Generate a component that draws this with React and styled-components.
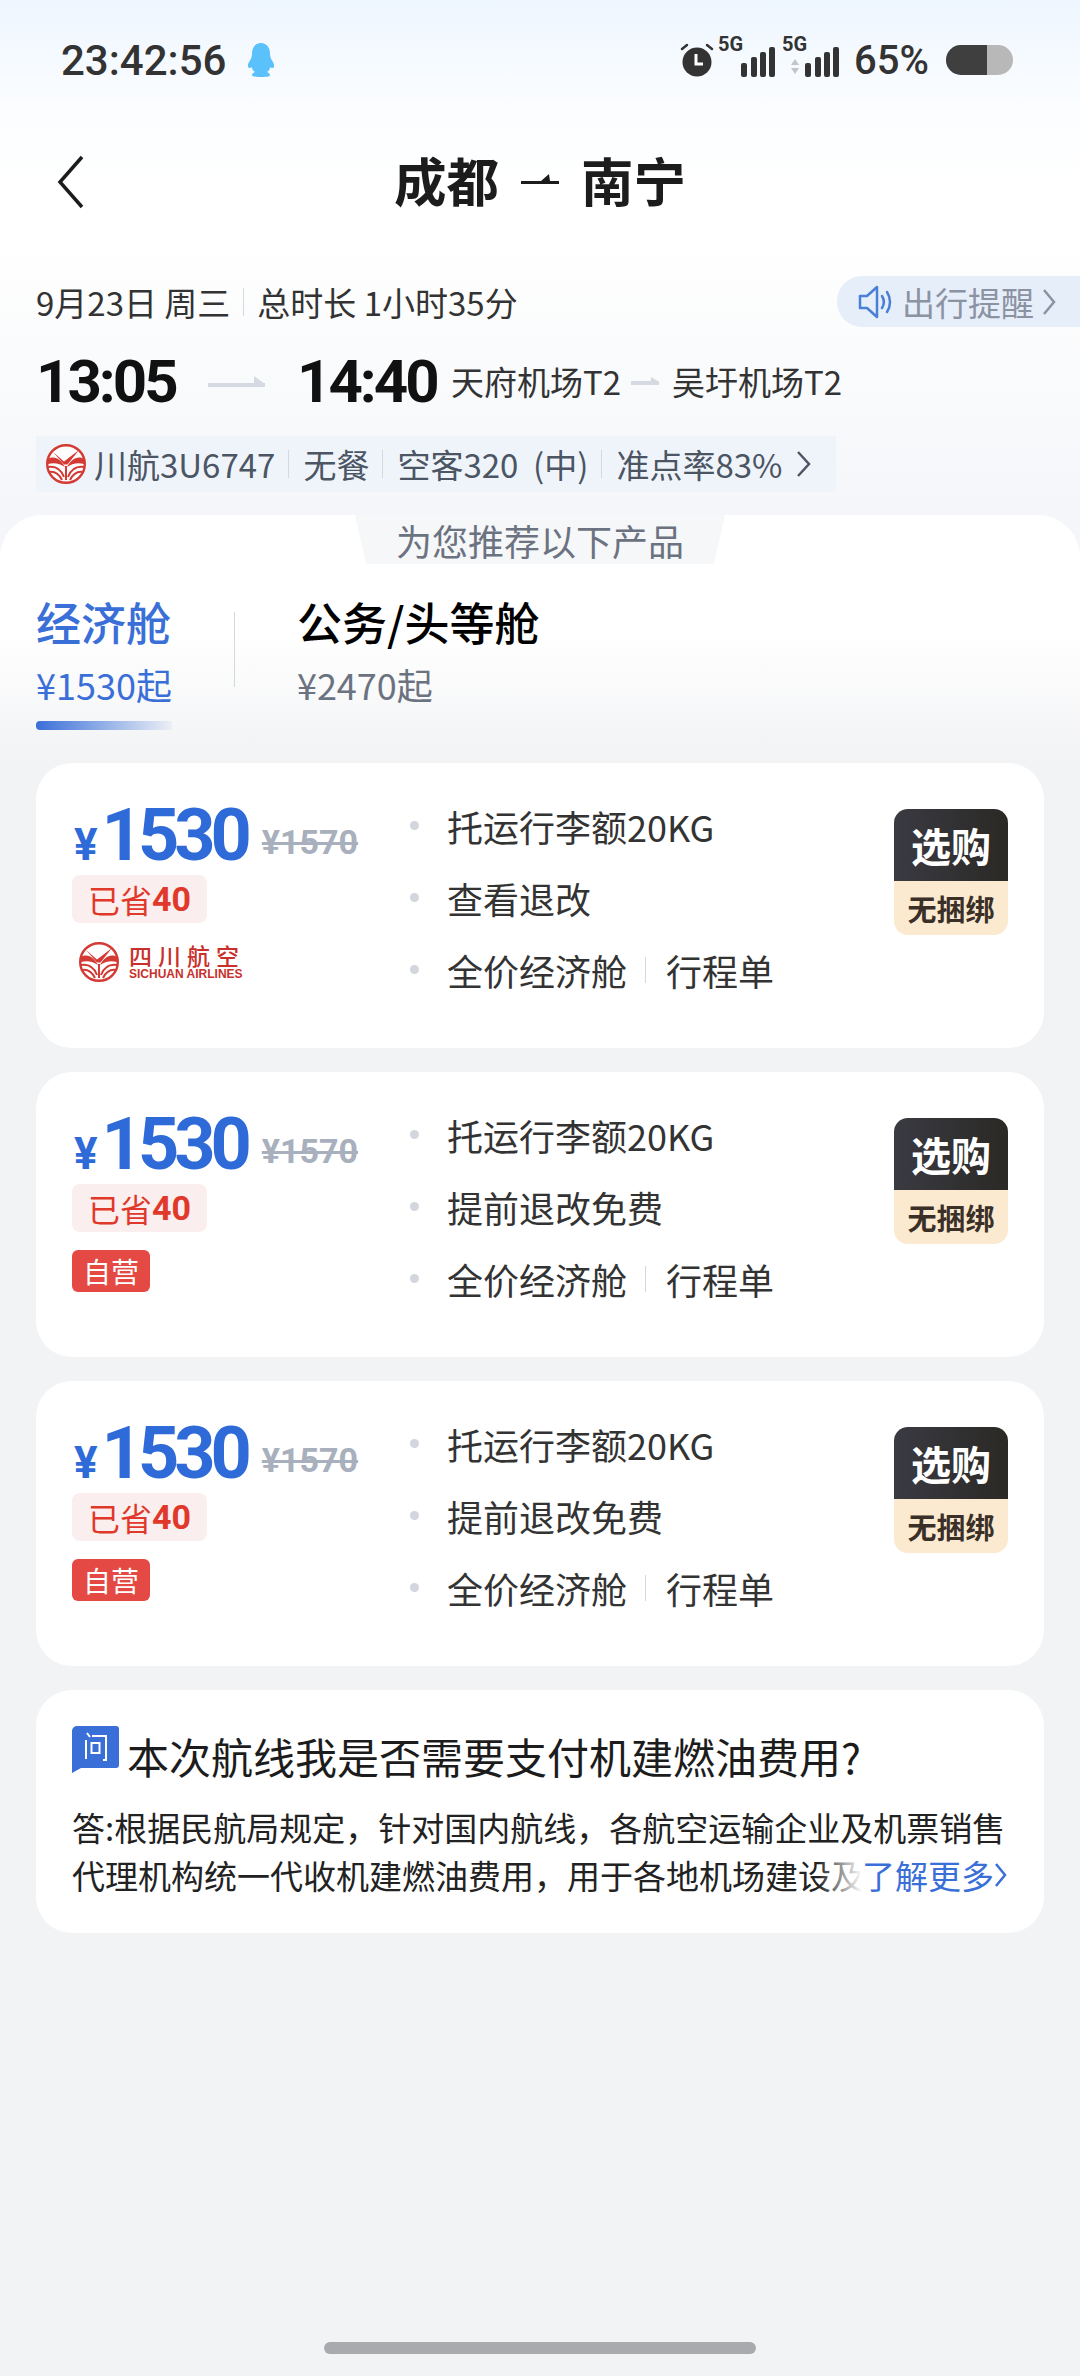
import React from 'react'
import styled, { createGlobalStyle } from 'styled-components'

const GlobalStyle = createGlobalStyle`
  html, body {
    margin: 0;
    padding: 0;
  }
  * {
    box-sizing: border-box;
  }
  body {
    font-family: "Noto Sans CJK SC", "Noto Sans", sans-serif;
  }
`

const products = [
  { refund: '查看退改', brand: 'airline' },
  { refund: '提前退改免费', brand: 'self' },
  { refund: '提前退改免费', brand: 'self' },
]

function SichuanMark({ size = 40 }) {
  return (
    <svg width={size} height={size} viewBox="0 0 40 40">
      <circle cx="20" cy="20" r="18.800" fill="#fff" stroke="#d43a34" strokeWidth="2.400" />
      <path d="M7 8l11 9.500L33 6 21.500 20.500h-3.500z" fill="#d43a34" />
      <path d="M2 15c7-4 13 1 17 8-5-3-10-5-17-3z" fill="#d43a34" />
      <path d="M38 15c-7-4-13 1-17 8 5-3 10-5 17-3z" fill="#d43a34" />
      <path
        d="M2 23c7-1 13 2 16 10M3 28c6-1 10 2 13 8M38 23c-7-1-13 2-16 10M37 28c-6-1-10 2-13 8M20 22v14"
        fill="none"
        stroke="#d43a34"
        strokeWidth="2"
      />
    </svg>
  )
}

function AirlineLogo() {
  return (
    <LogoRow>
      <SichuanMark size={40} />
      <LogoWords>
        <LogoCn>四川航空</LogoCn>
        <LogoEn>SICHUAN AIRLINES</LogoEn>
      </LogoWords>
    </LogoRow>
  )
}

function SignalBars({ dual }) {
  return (
    <SignalWrap>
      <FiveG>5G</FiveG>
      <svg width="52" height="36" viewBox="0 0 52 36">
        {dual && (
          <g fill="#c4c4c4">
            <path d="M4 15l4 6H0z" />
            <path d="M0 24h8l-4 6z" />
          </g>
        )}
        <g fill="#333">
          <rect x="14" y="19" width="6" height="14" rx="2" />
          <rect x="24" y="13" width="6" height="20" rx="2" />
          <rect x="33" y="8" width="6" height="25" rx="2" />
          <rect x="42" y="3" width="6" height="30" rx="2" />
        </g>
      </svg>
    </SignalWrap>
  )
}

function Arrow({ width, height = 10, color = '#d5dae2' }) {
  return (
    <svg width={width} height={height} viewBox={`0 0 ${width} ${height}`}>
      <path d={`M${width - height} 0L${width} ${height - 3}H${width - height}z`} fill={color} />
      <rect x="0" y={height - 4} width={width} height="4" fill={color} />
    </svg>
  )
}

function ProductCard({ refund, brand }) {
  return (
    <Card>
      <PriceColumn>
        <PriceRow>
          <Yen>¥</Yen>
          <Price>1530</Price>
          <OldPrice>¥1570</OldPrice>
        </PriceRow>
        <Saved>已省<b>40</b></Saved>
        {brand === 'airline' ? <AirlineLogo /> : <SelfTag>自营</SelfTag>}
      </PriceColumn>
      <Features>
        <Feature>托运行李额20KG</Feature>
        <Feature>{refund}</Feature>
        <Feature>全价经济舱<FeatureSep />行程单</Feature>
      </Features>
      <BuyButton>
        <BuyTop>选购</BuyTop>
        <BuyBottom>无捆绑</BuyBottom>
      </BuyButton>
    </Card>
  )
}

export default function App() {
  return (
    <Page>
      <GlobalStyle />
      <StatusBar>
        <StatusLeft>
          <Clock>23:42:56</Clock>
          <svg width="30" height="34" viewBox="0 0 30 34">
            <path d="M15 0c6 0 9 5 9 11 0 3 1 5 3 8 2 4 1 6-1 6-1 0-2-1-2-1 0 2-1 4-3 5 2 1 3 2 3 3 0 1-1 2-9 2s-9-1-9-2c0-1 1-2 3-3-2-1-3-3-3-5 0 0-1 1-2 1-2 0-3-2-1-6 2-3 3-5 3-8C6 5 9 0 15 0z" fill="#5ac1fb" />
          </svg>
        </StatusLeft>
        <StatusRight>
          <svg width="36" height="36" viewBox="0 0 36 36">
            <circle cx="18" cy="20" r="14.500" fill="#333" />
            <path d="M17 12v10h7" fill="none" stroke="#fff" strokeWidth="3" />
            <path d="M3 7l5-4M33 7l-5-4" stroke="#333" strokeWidth="2.500" strokeLinecap="round" />
          </svg>
          <SignalBars />
          <SignalBars dual />
          <Percent>65%</Percent>
          <Battery><BatteryFill /></Battery>
        </StatusRight>
      </StatusBar>

      <Header>
        <BackIcon width="27" height="54" viewBox="0 0 27 54">
          <path d="M25 2L3 27l22 25" fill="none" stroke="#1c1c1c" strokeWidth="3.500" />
        </BackIcon>
        <Title>
          成都
          <svg width="38" height="14" viewBox="0 0 38 14">
            <path d="M0 9h38v3H0zM20 9l8-7 1 7z" fill="#1c1c1c" />
          </svg>
          南宁
        </Title>
      </Header>

      <Summary>
        <DateRow>
          <DateText>9月23日 周三<ThinSep />总时长 1小时35分</DateText>
          <Reminder>
            <svg width="36" height="36" viewBox="0 0 36 36" fill="none" stroke="#4a7fd6" strokeWidth="2.500">
              <path d="M2 12h7l10-9v30l-10-9H2z" strokeLinejoin="round" />
              <path d="M24 12c2.500 4 2.500 8 0 12M29 8c4 6 4 14 0 20" strokeLinecap="round" />
            </svg>
            出行提醒
            <svg width="14" height="28" viewBox="0 0 14 28">
              <path d="M2 2l10 12L2 26" fill="none" stroke="#8b93a3" strokeWidth="2.500" />
            </svg>
          </Reminder>
        </DateRow>
        <TimeRow>
          <BigTime>13:05</BigTime>
          <TimeArrow><Arrow width={57} height={11} /></TimeArrow>
          <BigTime>14:40</BigTime>
          <Airport>天府机场T2</Airport>
          <AirportArrow><Arrow width={28} height={8} /></AirportArrow>
          <Airport>吴圩机场T2</Airport>
        </TimeRow>
        <FlightChip>
          <SichuanMark size={40} />
          <ChipText>川航3U6747</ChipText>
          <ChipSep />
          <ChipText>无餐</ChipText>
          <ChipSep />
          <ChipText>空客320&nbsp;&nbsp;(中)</ChipText>
          <ChipSep />
          <ChipText>准点率83%</ChipText>
          <ChipChevron width="16" height="30" viewBox="0 0 16 30">
            <path d="M2 3l11 12L2 27" fill="none" stroke="#4b5563" strokeWidth="2.500" />
          </ChipChevron>
        </FlightChip>
      </Summary>

      <Sheet>
        <RecommendWrap>
          <RecommendTab>为您推荐以下产品</RecommendTab>
        </RecommendWrap>
        <Tabs>
          <Tab $active>
            <TabName $active>经济舱</TabName>
            <TabPrice $active>¥1530起</TabPrice>
            <TabLine />
          </Tab>
          <TabDivider />
          <Tab>
            <TabName>公务/头等舱</TabName>
            <TabPrice>¥2470起</TabPrice>
          </Tab>
        </Tabs>
        <CardList>
          {products.map((p, i) => (
            <ProductCard key={i} refund={p.refund} brand={p.brand} />
          ))}
          <FaqCard>
            <FaqTitle>
              <svg width="47" height="47" viewBox="0 0 47 47">
                <path d="M5 0h39a3 3 0 0 1 3 3v36a3 3 0 0 1-3 3H9l-9 5V5a5 5 0 0 1 5-5z" fill="#3a6fd8" />
                <path d="M15 7l3 4M14 14v19M20 10h14v24h-3" fill="none" stroke="#fff" strokeWidth="2" />
                <rect x="19.500" y="17" width="8" height="10" fill="none" stroke="#fff" strokeWidth="2" />
              </svg>
              本次航线我是否需要支付机建燃油费用?
            </FaqTitle>
            <FaqAnswer>
              {'答:根据民航局规定\uFF0C针对国内航线\uFF0C各航空运输企业及机票销售代理机构统一代收机建燃油费用\uFF0C用于各地机场建设及'}
              <LearnMore>
                了解更多
                <svg width="14" height="28" viewBox="0 0 14 28">
                  <path d="M2 3l9 11-9 11" fill="none" stroke="#3a6fd8" strokeWidth="2.500" />
                </svg>
              </LearnMore>
            </FaqAnswer>
          </FaqCard>
        </CardList>
        <HomeBarWrap>
          <HomeBar />
        </HomeBarWrap>
      </Sheet>
    </Page>
  )
}

const Page = styled.div`
  width: 1080px;
  height: 2376px;
  overflow: hidden;
  display: flex;
  flex-direction: column;
  background: linear-gradient(180deg, #eef6ff 0, #fbfdff 105px, #ffffff 190px, #ffffff 240px, #f4f6f9 516px);
`

const StatusBar = styled.div`
  height: 120px;
  padding: 0 67px 0 61px;
  display: flex;
  align-items: center;
  justify-content: space-between;
`

const StatusLeft = styled.div`
  display: flex;
  align-items: center;
  gap: 20px;
`

const Clock = styled.span`
  font-family: Roboto, sans-serif;
  font-size: 42px;
  font-weight: 500;
  color: #333;
`

const StatusRight = styled.div`
  display: flex;
  align-items: center;
  gap: 10px;
`

const SignalWrap = styled.div`
  position: relative;
  width: 52px;
  height: 36px;
  margin-left: 2px;
  margin-top: 4px;
`

const FiveG = styled.span`
  position: absolute;
  left: -9px;
  top: -12px;
  font-family: Roboto, sans-serif;
  font-size: 20px;
  font-weight: 700;
  color: #333;
`

const Percent = styled.span`
  font-family: Roboto, sans-serif;
  font-size: 40px;
  font-weight: 500;
  color: #333;
  margin: 0 7px 0 1px;
`

const Battery = styled.div`
  width: 67px;
  height: 30px;
  border-radius: 15px;
  background: #b8b8b8;
  overflow: hidden;
`

const BatteryFill = styled.div`
  width: 41px;
  height: 100%;
  background: #3f3f3f;
`

const Header = styled.div`
  height: 124px;
  position: relative;
  display: flex;
  align-items: center;
  justify-content: center;
`

const BackIcon = styled.svg`
  position: absolute;
  left: 57px;
  top: 35px;
`

const Title = styled.div`
  display: flex;
  align-items: center;
  gap: 22px;
  margin-top: -6px;
  font-size: 52.500px;
  font-weight: 700;
  color: #1c1c1c;
  line-height: 60px;
`

const Summary = styled.div`
  height: 271px;
  padding-top: 32px;
  display: flex;
  flex-direction: column;
`

const DateRow = styled.div`
  height: 51px;
  display: flex;
  align-items: center;
  justify-content: space-between;
  padding-left: 36px;
`

const DateText = styled.div`
  display: flex;
  align-items: center;
  font-size: 33px;
  color: #333;
  white-space: pre;
`

const ThinSep = styled.i`
  width: 1px;
  height: 28px;
  margin: 0 13px;
  background: #d5d8de;
`

const Reminder = styled.div`
  width: 243px;
  height: 51px;
  padding-left: 21px;
  display: flex;
  align-items: center;
  gap: 8px;
  font-size: 33px;
  color: #8b93a3;
  border-radius: 25px 0 0 25px;
  background: #e6eefa;
`

const TimeRow = styled.div`
  height: 74px;
  margin-top: 17px;
  padding-left: 36px;
  display: flex;
  align-items: center;
`

const BigTime = styled.span`
  font-family: Roboto, sans-serif;
  font-size: 60px;
  font-weight: 700;
  letter-spacing: -3px;
  color: #111;
  width: 150px;
  flex: none;
`

const TimeArrow = styled.span`
  display: flex;
  margin: 0 32px 0 22px;
`

const Airport = styled.span`
  font-size: 33px;
  color: #333;
  margin-left: 4px;
`

const AirportArrow = styled.span`
  display: flex;
  margin: 0 9px 0 10px;
`

const FlightChip = styled.div`
  width: 800px;
  height: 56px;
  margin: 18px 0 0 36px;
  padding-left: 10px;
  display: flex;
  align-items: center;
  background: #eff4fb;
`

const ChipText = styled.span`
  font-size: 33px;
  color: #4b5563;
  margin-left: 8px;
  white-space: nowrap;
`

const ChipSep = styled.i`
  width: 1px;
  height: 28px;
  margin: 0 6px 0 13px;
  background: #d5d8de;
`

const ChipChevron = styled.svg`
  margin-left: 14px;
`

const Sheet = styled.div`
  flex: 1;
  display: flex;
  flex-direction: column;
  border-radius: 42px 42px 0 0;
  background: linear-gradient(180deg, #ffffff 0, #ffffff 120px, #f2f3f5 244px, #f2f3f5 100%);
`

const RecommendWrap = styled.div`
  display: flex;
  justify-content: center;
`

const RecommendTab = styled.div`
  width: 370px;
  height: 49px;
  display: flex;
  align-items: center;
  justify-content: center;
  font-size: 36px;
  color: #6b7280;
  background: #f6f7f9;
  clip-path: polygon(0 0, 100% 0, 97% 100%, 3% 100%);
`

const Tabs = styled.div`
  height: 199px;
  padding: 26px 0 0 36px;
  display: flex;
  align-items: flex-start;
`

const Tab = styled.div`
  display: flex;
  flex-direction: column;
`

const TabName = styled.div`
  font-size: 45px;
  font-weight: 500;
  line-height: 64px;
  color: ${props => (props.$active ? '#3a6fd8' : '#000')};
`

const TabPrice = styled.div`
  font-size: 36px;
  line-height: 50px;
  margin-top: 5px;
  color: ${props => (props.$active ? '#3a6fd8' : '#6b7280')};
`

const TabLine = styled.div`
  height: 9px;
  margin-top: 12px;
  border-radius: 4px 0 0 4px;
  background: linear-gradient(90deg, #3a6fd8, rgba(58, 111, 216, 0.05));
`

const TabDivider = styled.div`
  width: 1px;
  height: 75px;
  margin: 22px 62px 0 62px;
  background: #d5d8de;
`

const CardList = styled.div`
  padding: 0 36px;
  display: flex;
  flex-direction: column;
  gap: 24px;
`

const Card = styled.div`
  height: 285px;
  padding: 33px 36px 0;
  position: relative;
  display: flex;
  border-radius: 36px;
  background: #fff;
`

const PriceColumn = styled.div`
  width: 338px;
  display: flex;
  flex-direction: column;
  align-items: flex-start;
`

const PriceRow = styled.div`
  height: 80px;
  display: flex;
  align-items: baseline;
`

const Yen = styled.span`
  font-family: Roboto, sans-serif;
  font-size: 44px;
  font-weight: 700;
  color: #2f6ad9;
  margin: 0 4px 0 2px;
`

const Price = styled.span`
  font-family: Roboto, sans-serif;
  font-size: 72px;
  font-weight: 700;
  letter-spacing: -5px;
  line-height: 80px;
  color: #2f6ad9;
`

const OldPrice = styled.span`
  align-self: flex-start;
  margin: 26px 0 0 15px;
  font-family: Roboto, sans-serif;
  font-size: 34px;
  line-height: 40px;
  font-weight: 700;
  color: #a8afbd;
  text-decoration: line-through;
`

const Saved = styled.div`
  height: 48px;
  padding: 0 16px;
  display: flex;
  align-items: center;
  margin-top: -1px;
  font-size: 32px;
  color: #e0392b;
  border-radius: 8px;
  background: #fbeeee;

  b {
    font-family: Roboto, sans-serif;
    font-weight: 700;
    font-size: 34px;
  }
`

const SelfTag = styled.div`
  width: 78px;
  height: 42px;
  margin-top: 18px;
  display: flex;
  align-items: center;
  justify-content: center;
  font-size: 28px;
  color: #fff;
  border-radius: 6px;
  background: #e44a43;
`

const LogoRow = styled.div`
  margin: 19px 0 0 7px;
  display: flex;
  align-items: center;
  gap: 10px;
`

const LogoWords = styled.div`
  display: flex;
  flex-direction: column;
  color: #c9302c;
`

const LogoCn = styled.span`
  font-size: 23px;
  font-weight: 500;
  line-height: 25px;
  letter-spacing: 6px;
`

const LogoEn = styled.span`
  font-family: "Liberation Sans", sans-serif;
  font-size: 12px;
  font-weight: 700;
  line-height: 13px;
  white-space: nowrap;
`

const Features = styled.div`
  margin-top: -6px;
  display: flex;
  flex-direction: column;
`

const Feature = styled.div`
  height: 72px;
  position: relative;
  padding-left: 37px;
  display: flex;
  align-items: center;
  font-size: 36px;
  color: #333;

  &::before {
    content: '';
    position: absolute;
    left: 0;
    top: 31px;
    width: 9px;
    height: 9px;
    border-radius: 50%;
    background: #d3d6dc;
  }
`

const FeatureSep = styled.i`
  width: 1px;
  height: 26px;
  margin: 0 20px 0 18px;
  background: #d5d8de;
`

const BuyButton = styled.div`
  position: absolute;
  top: 46px;
  right: 36px;
  width: 114px;
  height: 126px;
  display: flex;
  flex-direction: column;
  overflow: hidden;
  border-radius: 14px;
`

const BuyTop = styled.div`
  height: 72px;
  display: flex;
  align-items: center;
  justify-content: center;
  font-size: 40px;
  font-weight: 700;
  color: #fff;
  background: linear-gradient(90deg, #3a3a42, #2b2925);
`

const BuyBottom = styled.div`
  flex: 1;
  display: flex;
  align-items: center;
  justify-content: center;
  font-size: 29px;
  font-weight: 700;
  color: #3a3028;
  background: #fbe9d0;
`

const FaqCard = styled.div`
  height: 243px;
  padding: 36px 36px 0;
  border-radius: 36px;
  background: #fff;
`

const FaqTitle = styled.div`
  display: flex;
  align-items: flex-start;
  gap: 8px;
  font-size: 42px;
  line-height: 60px;
  color: #1c1c1c;
`

const FaqAnswer = styled.div`
  position: relative;
  height: 96px;
  margin-top: 17px;
  font-size: 33px;
  line-height: 48px;
  color: #222;
`

const LearnMore = styled.span`
  position: absolute;
  right: 0;
  bottom: 0;
  height: 48px;
  display: flex;
  align-items: center;
  color: #3a6fd8;
  background: #fff;

  &::before {
    content: '';
    position: absolute;
    left: -44px;
    top: 0;
    width: 44px;
    height: 100%;
    background: linear-gradient(90deg, rgba(255, 255, 255, 0), #fff);
  }
`

const HomeBarWrap = styled.div`
  margin-top: auto;
  padding-bottom: 22px;
  display: flex;
  justify-content: center;
`

const HomeBar = styled.div`
  width: 432px;
  height: 12px;
  border-radius: 6px;
  background: #a9aaad;
`
